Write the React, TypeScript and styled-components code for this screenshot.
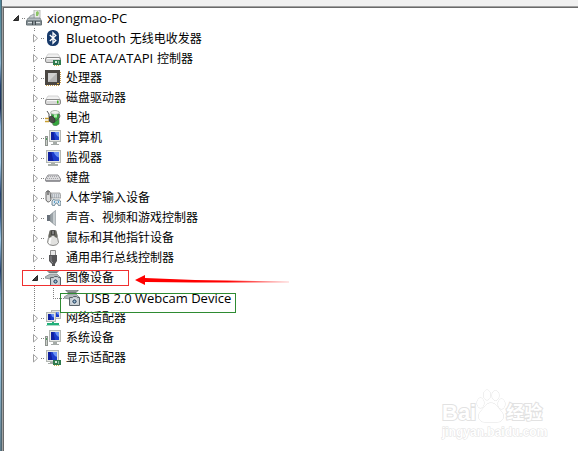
import React, { useState } from "react";
import styled, { createGlobalStyle } from "styled-components";

const GlobalStyle = createGlobalStyle`
  *, *::before, *::after { box-sizing: border-box; }
  html, body { margin: 0; height: 100%; background: #fff; overflow: hidden; }
  #root { height: 100%; }
`;

const Window = styled.div`
  position: relative;
  display: grid;
  grid-template-columns: 2px 1fr;
  height: 100vh;
  color: #000;
  font-family: "Open Sans", "Noto Sans CJK SC", sans-serif;
  font-size: 12px;
  line-height: 20px;
`;

const WindowEdge = styled.div`
  border-right: 1px solid #4d6672;
  background: linear-gradient(#4f8598 0, #6c9cae 10%, #8fb8d4 14%, #24406e 19%, #1c2c54 24%, #8ab4dc 28%, #a8d0ee 36%, #24406e 43%, #3a5c8c 48%, #a0ccec 53%, #24406e 60%, #7ba8d0 66%, #9cc8e4 80%, #5c7888 100%);
`;

const Client = styled.main`
  display: flex;
  flex-direction: column;
  min-width: 0;
  background: #f0f0f0;
`;

const Toolbar = styled.div`
  height: 6px;
  flex: none;
`;

const TreePane = styled.div`
  flex: 1;
  border-top: 1px solid #a0a0a0;
  border-left: 1px solid #a0a0a0;
`;

const TreeInner = styled.div`
  height: 100%;
  padding-left: 6px;
  border-top: 1px solid #696969;
  border-left: 1px solid #696969;
  background: #fff;
`;

const Branch = styled.ul<{ $nested?: boolean }>`
  margin: 0;
  padding: 0 0 0 ${(p) => (p.$nested ? 19 : 0)}px;
  list-style: none;
`;

const Item = styled.li<{ $last: boolean; $root: boolean }>`
  background-image: ${(p) =>
    p.$root ? "none" : "repeating-linear-gradient(#808080 0 1px, transparent 1px 2px)"};
  background-repeat: no-repeat;
  background-position: 5px 0;
  background-size: 1px ${(p) => (p.$last ? "10px" : "100%")};
`;

const Row = styled.div`
  display: flex;
  align-items: center;
  height: 20px;
  white-space: nowrap;
`;

const Toggle = styled.button`
  display: flex;
  align-items: center;
  justify-content: center;
  width: 12px;
  height: 14px;
  padding: 0;
  border: 0;
  background: #fff;
`;

const Connector = styled.span<{ $leaf?: boolean }>`
  width: ${(p) => (p.$leaf ? 11 : 4)}px;
  height: 1px;
  margin-left: ${(p) => (p.$leaf ? 5 : 0)}px;
  background: repeating-linear-gradient(90deg, #808080 0 1px, transparent 1px 2px);
`;

const Glyph = styled.svg`
  display: block;
  flex: none;
  width: 16px;
  height: 16px;
`;

const Label = styled.span`
  display: flex;
  align-items: baseline;
  gap: 4px;
  margin-left: 5px;
`;

const Latin = styled.span`
  font-size: 13px;
`;

const Highlight = styled.div<{ $tone: "red" | "green" }>`
  position: absolute;
  pointer-events: none;
  border: 1px solid ${(p) => (p.$tone === "red" ? "#f03030" : "#2e8b32")};
  left: ${(p) => (p.$tone === "red" ? 22 : 60)}px;
  top: ${(p) => (p.$tone === "red" ? 270 : 293)}px;
  width: ${(p) => (p.$tone === "red" ? 107 : 176)}px;
  height: ${(p) => (p.$tone === "red" ? 16 : 20)}px;
`;

const Arrow = styled.svg`
  position: absolute;
  left: 135px;
  top: 274px;
  width: 154px;
  height: 12px;
  pointer-events: none;
`;

const Watermark = styled.div`
  position: absolute;
  right: 32px;
  bottom: 12px;
  width: 104px;
  color: #fff;
  font-family: "Liberation Sans", "Noto Sans CJK SC", sans-serif;
  font-weight: 700;
  paint-order: stroke fill;
  -webkit-text-stroke: 2px #e2e2e2;
  pointer-events: none;
`;

const Brand = styled.div`
  display: flex;
  align-items: flex-end;
  height: 34px;
`;

const BrandText = styled.span<{ $cjk?: boolean }>`
  font-size: ${(p) => (p.$cjk ? 18 : 22)}px;
  line-height: 20px;
`;

const Paw = styled.svg`
  flex: none;
  width: 30px;
  height: 34px;
  font-size: 14px;
`;

const Site = styled.div`
  margin-top: 2px;
  font-size: 12px;
  line-height: 14px;
  -webkit-text-stroke: 1px #e2e2e2;
`;

type IconName =
  | "root" | "bluetooth" | "ide" | "cpu" | "disk" | "battery" | "computer" | "monitor"
  | "keyboard" | "hid" | "sound" | "mouse" | "usb" | "camera" | "network" | "display";

const Screen = ({ x = 0, y = 0, w = 13, h = 10 }) => (
  <g transform={`translate(${x} ${y})`}>
    <rect x=".5" y=".5" width={w - 1} height={h - 1} fill="#e6e8e4" stroke="#b4b8b4" />
    <rect x="2" y="2" width={w - 4} height={h - 4} fill="#1c3ccc" />
    <path d={`M2 2h${(w - 4) * 0.3}l${(w - 4) * 0.2} ${h - 4}H2z`} fill="#1020a0" />
    <path d={`M${w * 0.5} 2H${w - 2}v${(h - 4) * 0.6}q-${w * 0.2} 0-${w * 0.5 - 2}-${(h - 4) * 0.6}`} fill="#6a92f4" />
  </g>
);

const Card = () => (
  <g>
    <rect x="8" y="10" width="8" height="5" fill="#2f7a4e" />
    <path d="M9 15.500h6" stroke="#c9b14a" strokeDasharray="1 1" />
    <rect x="10" y="11" width="2" height="2" fill="#d7eadc" />
    <rect x="13" y="11" width="1" height="3" fill="#8fc0a0" />
  </g>
);

const Drive = ({ y = 0 }) => (
  <g transform={`translate(0 ${y})`}>
    <path d="M3 1h10l2.500 4H.5z" fill="#f0f0f0" stroke="#c4c4c4" strokeWidth=".7" />
    <rect x=".5" y="4.500" width="15" height="5" rx="1.500" fill="#d8d8d8" stroke="#8c8c8c" />
    <path d="M2 5.500h12" stroke="#fafafa" />
  </g>
);

const art: Record<IconName, React.ReactNode> = {
  root: (
    <>
      <path d="M8 0h6v9H8z" fill="#e9ece8" stroke="#a9ada9" strokeWidth=".8" />
      <path d="M10 2l2-1 1 2-1 3h-2z" fill="#8dc466" />
      <path d="M4 6l4-2v5H3z" fill="#cfd4d6" stroke="#8b9295" strokeWidth=".7" />
      <path d="M2 8h12l1.500 3H.5z" fill="#b4bcc0" stroke="#6c7478" strokeWidth=".7" />
      <path d="M.5 11h15v4H.5z" fill="#8b959a" stroke="#657075" />
      <path d="M2 12.500h4M10 12.500h4" stroke="#dde3e5" />
      <path d="M6.500 11v4M9.500 11v4" stroke="#434b50" />
    </>
  ),
  bluetooth: (
    <>
      <rect x="2" y="0" width="12" height="16" rx="5.500" fill="#173a6b" />
      <path d="M4.800 5l6 5.500L8 13.200V2.800l2.800 2.700-6 5.500" fill="none" stroke="#fff" strokeWidth="1.300" />
    </>
  ),
  ide: (
    <>
      <Drive y={3} />
      <Card />
    </>
  ),
  cpu: (
    <>
      <path d="M1 15.500h14M15.500 2v12" stroke="#c79a46" strokeWidth="1" strokeDasharray="1 1" />
      <path d="M0 0h15v15H0z" fill="#4a4642" />
      <path d="M3 3h9v9H3z" fill="#b4b4b4" />
      <path d="M3 3h9L3 12z" fill="#d0d0d0" />
      <path d="M12 13h2v1h-2z" fill="#e4b040" />
    </>
  ),
  disk: (
    <>
      <Drive y={5} />
      <rect x="12" y="10.500" width="1.500" height="3" fill="#45b52c" />
    </>
  ),
  battery: (
    <>
      <path d="M6 2q4-3 8 0v12q-3 3-6 1z" fill="#35a83e" stroke="#548158" strokeWidth=".7" />
      <path d="M6 1.500q4-2.500 8 0v2q-4 2-8 0z" fill="#f0f2ee" stroke="#9da49b" strokeWidth=".6" />
      <path d="M10.500 4.500v3" stroke="#b2eeb0" strokeWidth="3" />
      <path d="M2 1l2 3v3M14 4q2 2 0 4l-3 3" fill="none" stroke="#555" />
      <path d="M4 7l3-1 3 3v3l-3 1-3-2z" fill="#4c4c48" stroke="#2c2c2c" strokeWidth=".7" />
      <path d="M0 8.500h4M0 11.500h4" stroke="#c99f31" strokeWidth="1.300" />
    </>
  ),
  computer: (
    <>
      <rect x=".5" y="6.500" width="2" height="9" fill="#cbcfca" stroke="#8e938f" />
      <path d="M1 8h1v2H1z" fill="#50a060" />
      <path d="M8 11h4v3h2v1H6v-1h2z" fill="#a5aba8" />
      <Screen x={4} y={0} w={12} h={12} />
    </>
  ),
  monitor: (
    <>
      <path d="M6 11h4v3h3v2H3v-2h3z" fill="#a9afaa" />
      <Screen x={1} y={0} w={15} h={13} />
    </>
  ),
  keyboard: (
    <>
      <path d="M3 5h10l2.500 4v2H.5V9z" fill="#dcdcde" stroke="#909094" strokeLinejoin="round" />
      <path d="M3 6.500h10M2 8.500h12" stroke="#a4a4a8" strokeDasharray="1 1" />
      <path d="M1 11h14" stroke="#6e6e75" />
    </>
  ),
  hid: (
    <>
      <path d="M6 3h9l1 5H6z" fill="#d8dce0" stroke="#888" strokeWidth=".7" />
      <path d="M7 5h8M7 7h8" stroke="#8c939c" strokeDasharray="1 1" />
      <path d="M1 2q2-3 4 0l1 8q-3 4-5 0z" fill="#ddd" stroke="#666" />
      <path d="M3 1v4" stroke="#333" />
      <path d="M7 11q1-3 3-1h3q3-1 3 5l-2 1-2-3h-1l-2 3-2-1z" fill="#d8e5ee" stroke="#56707d" strokeWidth=".8" />
      <path d="M9 12h1M13 12h1" stroke="#2e8bc4" strokeWidth="1.500" />
    </>
  ),
  sound: (
    <>
      <path d="M2 5h3v6H2z" fill="#68707a" />
      <path d="M5 5l5.500-4.500v15L5 11z" fill="#9ba3a8" stroke="#757d82" strokeWidth=".6" />
      <path d="M8 3l2.500-2.500v15L8 13z" fill="#c6cccf" />
    </>
  ),
  mouse: (
    <>
      <path d="M5 .5h6l1.500 7 1 5q-1 3-5.500 3t-5.500-3l1-5z" fill="#e1e1df" stroke="#8a8a87" />
      <path d="M5 1q-2 4-1 7 3-1 4-4 1 3 4 4 1-3-1-7z" fill="#66665f" />
      <path d="M7 0h2v5H7z" fill="#ddd" stroke="#252525" />
      <path d="M6 8q-2 3-1 6" stroke="#fff" fill="none" strokeWidth="1.500" />
    </>
  ),
  usb: (
    <>
      <path d="M5.500.5h5v5h-5z" fill="#e8e8e8" stroke="#8d8d8d" />
      <path d="M4 5h8v6l-2 3v2H7v-2l-3-3z" fill="#555557" />
      <path d="M6 6v5l2 2" stroke="#8c8c90" fill="none" />
    </>
  ),
  camera: (
    <>
      <path d="M1 0h14l-3 3H4z" fill="#757b7b" />
      <path d="M3 1h10" stroke="#abb0b0" />
      <path d="M0 7l5-3h7l3 3v2H5L0 8z" fill="#b4babc" stroke="#798083" strokeWidth=".7" />
      <path d="M5.500 7.500h3l1-1h3l1 1h2v8h-10z" fill="#c4ccd2" stroke="#5b646a" />
      <circle cx="10.500" cy="11.500" r="2.700" fill="#36516a" stroke="#f7f8f8" />
      <circle cx="10.500" cy="11.500" r="1" fill="#a1c4de" />
    </>
  ),
  network: (
    <>
      <Screen x={6} y={0} w={10} h={9} />
      <Screen x={1} y={2} w={10} h={10} />
      <path d="M7 12h2v1h5v2H2v-2h5z" fill="#22b07a" />
      <path d="M1 15.500h14" stroke="#aadbc8" />
    </>
  ),
  display: (
    <>
      <path d="M5 11h5v3H3v-1h2z" fill="#a5aba8" />
      <Screen x={1} y={0} w={13} h={12} />
      <Card />
    </>
  ),
};

interface Device {
  name?: string;
  latin?: string;
  icon: IconName;
  open?: boolean;
  leaf?: boolean;
  children?: Device[];
}

const devices: Device = {
  latin: "xiongmao-PC",
  icon: "root",
  open: true,
  children: [
    { latin: "Bluetooth", name: "无线电收发器", icon: "bluetooth" },
    { latin: "IDE ATA/ATAPI", name: "控制器", icon: "ide" },
    { name: "处理器", icon: "cpu" },
    { name: "磁盘驱动器", icon: "disk" },
    { name: "电池", icon: "battery" },
    { name: "计算机", icon: "computer" },
    { name: "监视器", icon: "monitor" },
    { name: "键盘", icon: "keyboard" },
    { name: "人体学输入设备", icon: "hid" },
    { name: "声音、视频和游戏控制器", icon: "sound" },
    { name: "鼠标和其他指针设备", icon: "mouse" },
    { name: "通用串行总线控制器", icon: "usb" },
    {
      name: "图像设备",
      icon: "camera",
      open: true,
      children: [{ latin: "USB 2.0 Webcam Device", icon: "camera", leaf: true }],
    },
    { name: "网络适配器", icon: "network" },
    { name: "系统设备", icon: "computer" },
    { name: "显示适配器", icon: "display" },
  ],
};

function Node({ device, last = false, root = false }: { device: Device; last?: boolean; root?: boolean }) {
  const [open, setOpen] = useState(Boolean(device.open));
  const title = [device.latin, device.name].filter(Boolean).join(" ");
  return (
    <Item $last={last} $root={root}>
      <Row>
        {!device.leaf && (
          <Toggle type="button" aria-label={title} aria-expanded={open} onClick={() => setOpen(!open)}>
            <svg width="8" height="10" viewBox="0 0 8 10" aria-hidden="true">
              {open ? (
                <path d="M6.500 2.500v5h-5z" fill="#404040" stroke="#262626" />
              ) : (
                <path d="M2.500 1.500v7.500l4-3.750z" fill="#fff" stroke="#a0a0a0" />
              )}
            </svg>
          </Toggle>
        )}
        <Connector $leaf={device.leaf} />
        <Glyph viewBox="0 0 16 16" aria-hidden="true">{art[device.icon]}</Glyph>
        <Label>
          {device.latin && <Latin>{device.latin}</Latin>}
          {device.name && <span>{device.name}</span>}
        </Label>
      </Row>
      {open && device.children && (
        <Branch $nested>
          {device.children.map((child, i) => (
            <Node key={i} device={child} last={i === device.children!.length - 1} />
          ))}
        </Branch>
      )}
    </Item>
  );
}

export default function App() {
  return (
    <>
      <GlobalStyle />
      <Window>
        <WindowEdge />
        <Client>
          <Toolbar />
          <TreePane>
            <TreeInner>
              <Branch>
                <Node device={devices} root />
              </Branch>
            </TreeInner>
          </TreePane>
        </Client>
        <Highlight $tone="red" />
        <Highlight $tone="green" />
        <Arrow viewBox="0 0 154 12" aria-hidden="true">
          <defs>
            <linearGradient id="tail">
              <stop offset=".6" stopColor="#f00" />
              <stop offset="1" stopColor="#f00" stopOpacity=".2" />
            </linearGradient>
          </defs>
          <path d="M0 6l10-5v3l50 2 94 1.500v1L60 8.500 10 8v3z" fill="url(#tail)" />
        </Arrow>
        <Watermark>
          <Brand>
            <BrandText>Bai</BrandText>
            <Paw viewBox="0 0 30 34" aria-hidden="true">
              <g fill="#fff" stroke="#e2e2e2" strokeWidth="1">
                <ellipse cx="4.500" cy="14" rx="3.500" ry="5" />
                <ellipse cx="11" cy="6" rx="3.500" ry="5" />
                <ellipse cx="19.500" cy="6.500" rx="3.500" ry="5" />
                <ellipse cx="25.500" cy="15" rx="3.500" ry="5" />
                <path d="M15 14c5 0 6 4 10 8s3 11-4 11H9c-7 0-8-7-4-11s5-8 10-8z" />
              </g>
              <text x="15" y="30" textAnchor="middle" fill="#fff">du</text>
            </Paw>
            <BrandText $cjk>经验</BrandText>
          </Brand>
          <Site>jingyan.baidu.com</Site>
        </Watermark>
      </Window>
    </>
  );
}
